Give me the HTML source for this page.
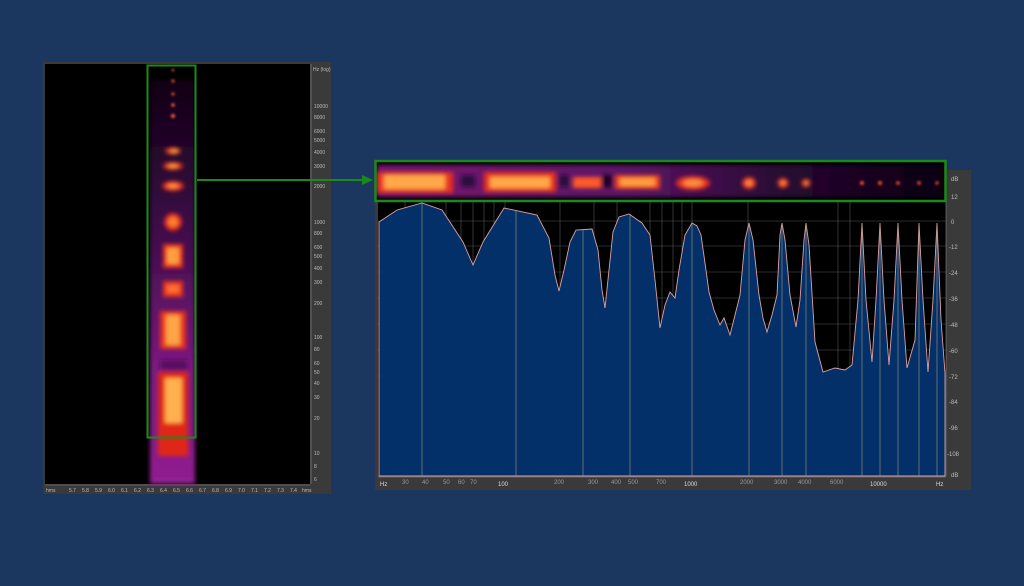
<!DOCTYPE html>
<html><head><meta charset="utf-8"><style>
html,body{margin:0;padding:0;background:#1b3760;}
svg{display:block}
text{font-family:"Liberation Sans",sans-serif;}
</style></head><body>
<svg width="1024" height="586" viewBox="0 0 1024 586" xmlns="http://www.w3.org/2000/svg">
<defs>
<filter id="b2" x="-50%" y="-50%" width="200%" height="200%"><feGaussianBlur stdDeviation="2"/></filter>
<filter id="b1" x="-50%" y="-50%" width="200%" height="200%"><feGaussianBlur stdDeviation="1.2"/></filter>
<filter id="b4" x="-50%" y="-50%" width="200%" height="200%"><feGaussianBlur stdDeviation="4"/></filter>
<linearGradient id="colfade" x1="0" y1="0" x2="0" y2="1">
<stop offset="0" stop-color="#3a0a45" stop-opacity="0.3"/>
<stop offset="0.3" stop-color="#4a0f5a" stop-opacity="0.7"/>
<stop offset="0.7" stop-color="#7a1a80"/>
<stop offset="1" stop-color="#902090"/>
</linearGradient>
<linearGradient id="stripbg" x1="0" y1="0" x2="1" y2="0">
<stop offset="0" stop-color="#7a1870"/>
<stop offset="0.45" stop-color="#5a1565"/>
<stop offset="0.7" stop-color="#2a0835"/>
<stop offset="1" stop-color="#0a0210"/>
</linearGradient>
</defs>
<rect width="1024" height="586" fill="#1b3760"/>

<!-- LEFT PANEL -->
<rect x="43" y="62" width="288" height="432" fill="#3a3a3a"/>
<rect x="45" y="64" width="265" height="420" fill="#000"/>
<g font-size="5" fill="#bbb">
<text x="313" y="71">Hz (log)</text>
<text x="314" y="108">10000</text><text x="314" y="119">8000</text><text x="314" y="133">6000</text><text x="314" y="142">5000</text><text x="314" y="154">4000</text><text x="314" y="168">3000</text><text x="314" y="188">2000</text>
<text x="314" y="224">1000</text><text x="314" y="235">800</text><text x="314" y="249">600</text><text x="314" y="258">500</text><text x="314" y="270">400</text><text x="314" y="284">300</text><text x="314" y="305">200</text>
<text x="314" y="339">100</text><text x="314" y="351">80</text><text x="314" y="365">60</text><text x="314" y="374">50</text><text x="314" y="385">40</text><text x="314" y="399">30</text><text x="314" y="420">20</text>
<text x="314" y="455">10</text><text x="314" y="468">8</text><text x="314" y="481">6</text>
</g>
<line x1="311" y1="64" x2="311" y2="484" stroke="#888" stroke-width="0.6"/>
<line x1="45" y1="485" x2="310" y2="485" stroke="#888" stroke-width="0.6"/>
<g font-size="5" fill="#bbb">
<text x="46" y="492">hms</text><text x="69" y="492">5.7</text><text x="82" y="492">5.8</text><text x="95" y="492">5.9</text><text x="108" y="492">6.0</text><text x="121" y="492">6.1</text><text x="134" y="492">6.2</text><text x="147" y="492">6.3</text><text x="160" y="492">6.4</text><text x="173" y="492">6.5</text><text x="186" y="492">6.6</text><text x="199" y="492">6.7</text><text x="212" y="492">6.8</text><text x="225" y="492">6.9</text><text x="238" y="492">7.0</text><text x="251" y="492">7.1</text><text x="264" y="492">7.2</text><text x="277" y="492">7.3</text><text x="290" y="492">7.4</text><text x="302" y="492">hms</text>
</g>
<!-- column -->
<rect x="150" y="80" width="45" height="404" fill="url(#colfade)" filter="url(#b2)"/>
<g filter="url(#b1)">
<circle cx="173" cy="70" r="1.3" fill="#ff6040"/><circle cx="173" cy="81" r="1.5" fill="#ff6040"/><circle cx="173" cy="94" r="1.5" fill="#ff6040"/><circle cx="173" cy="105" r="1.7" fill="#ff6040"/><circle cx="173" cy="116" r="2" fill="#ff6040"/>
</g>
<g filter="url(#b2)">
<ellipse cx="173" cy="151" rx="8" ry="3.5" fill="#e03020"/><ellipse cx="174" cy="151" rx="4" ry="2" fill="#ffa040"/>
<ellipse cx="173" cy="166" rx="10" ry="4" fill="#e03020"/><ellipse cx="173" cy="166" rx="5" ry="2" fill="#ffa040"/>
<ellipse cx="173" cy="186" rx="11" ry="5" fill="#e02820"/><ellipse cx="173" cy="186" rx="6" ry="2.5" fill="#ff9040"/>
<ellipse cx="173" cy="222" rx="9" ry="9" fill="#e02820"/><ellipse cx="173" cy="222" rx="5" ry="5" fill="#ff8030"/>
<rect x="163" y="244" width="20" height="24" fill="#e83020"/><rect x="167" y="248" width="12" height="16" fill="#ffa040"/>
<rect x="163" y="281" width="20" height="16" fill="#e83020"/><rect x="167" y="285" width="12" height="8" fill="#ff7030"/>
<rect x="160" y="311" width="26" height="38" fill="#e83020"/><rect x="166" y="315" width="14" height="30" fill="#ffa545"/>
<rect x="158" y="372" width="30" height="84" fill="#e02818"/><rect x="165" y="378" width="17" height="45" fill="#ffb050"/>
<rect x="160" y="360" width="28" height="10" fill="#5a1060"/>
</g>
<rect x="147.5" y="65.5" width="48" height="372" fill="none" stroke="#1a8a1a" stroke-width="2"/>
<!-- arrow -->
<line x1="197" y1="180" x2="364" y2="180" stroke="#1a8a1a" stroke-width="2"/>
<polygon points="362,175 373,180 362,185" fill="#1a8a1a"/>

<!-- RIGHT PANEL -->
<rect x="375" y="170" width="596" height="320" fill="#3a3a3a"/>
<rect x="378" y="201" width="568" height="275" fill="#000"/>
<g stroke="#555" stroke-width="0.6">
<line x1="378" y1="221" x2="946" y2="221"/><line x1="378" y1="246" x2="946" y2="246"/><line x1="378" y1="272" x2="946" y2="272"/><line x1="378" y1="298" x2="946" y2="298"/><line x1="378" y1="324" x2="946" y2="324"/><line x1="378" y1="350" x2="946" y2="350"/><line x1="378" y1="376" x2="946" y2="376"/>
<line x1="405" y1="201" x2="405" y2="476"/><line x1="446" y1="201" x2="446" y2="476"/><line x1="461" y1="201" x2="461" y2="476"/><line x1="473" y1="201" x2="473" y2="476"/><line x1="484" y1="201" x2="484" y2="476"/><line x1="494" y1="201" x2="494" y2="476"/><line x1="505" y1="201" x2="505" y2="476"/><line x1="560" y1="201" x2="560" y2="476"/><line x1="594" y1="201" x2="594" y2="476"/><line x1="617" y1="201" x2="617" y2="476"/><line x1="650" y1="201" x2="650" y2="476"/><line x1="662" y1="201" x2="662" y2="476"/><line x1="673" y1="201" x2="673" y2="476"/><line x1="682" y1="201" x2="682" y2="476"/><line x1="692" y1="201" x2="692" y2="476"/><line x1="748" y1="201" x2="748" y2="476"/><line x1="838" y1="201" x2="838" y2="476"/><line x1="850" y1="201" x2="850" y2="476"/>
</g>
<path d="M379,476 L379,222 L397,210 L422,203 L442,210 L463,242 L473,265 L483,242 L504,208 L537,215 L549,238 L555,275 L559,291 L564,270 L570,242 L576,230 L592,229 L598,250 L602,290 L605,308 L609,270 L613,232 L619,217 L629,214 L642,223 L650,235 L655,280 L660,328 L665,305 L670,292 L675,298 L679,270 L685,235 L692,223 L697,226 L701,235 L706,270 L709,292 L714,310 L720,325 L724,318 L730,335 L735,315 L740,295 L745,240 L749,223 L753,240 L759,295 L763,318 L767,332 L772,315 L777,295 L780,235 L782,223 L785,240 L790,295 L796,327 L800,300 L804,240 L806,223 L809,245 L815,342 L823,372 L835,368 L845,370 L852,365 L858,300 L862,223 L866,300 L872,362 L876,300 L880,223 L884,300 L889,365 L894,300 L898,223 L902,300 L907,368 L915,340 L919,223 L923,300 L928,372 L933,300 L937,223 L941,320 L945,373 L945,476 Z" fill="#04306a" stroke="#e0a0a0" stroke-width="0.9"/>
<g stroke="#a8a070" stroke-width="0.7" opacity="0.8">
<line x1="422" y1="203" x2="422" y2="476"/><line x1="516" y1="210" x2="516" y2="476"/><line x1="583" y1="229" x2="583" y2="476"/><line x1="630" y1="214" x2="630" y2="476"/><line x1="692" y1="223" x2="692" y2="476"/><line x1="749" y1="223" x2="749" y2="476"/><line x1="782" y1="223" x2="782" y2="476"/><line x1="806" y1="223" x2="806" y2="476"/><line x1="862" y1="223" x2="862" y2="476"/><line x1="880" y1="223" x2="880" y2="476"/><line x1="898" y1="223" x2="898" y2="476"/><line x1="919" y1="223" x2="919" y2="476"/><line x1="937" y1="223" x2="937" y2="476"/>
</g>
<line x1="378" y1="477" x2="946" y2="477" stroke="#888" stroke-width="0.6"/>
<line x1="946" y1="201" x2="946" y2="476" stroke="#888" stroke-width="0.6"/>
<g font-size="6" fill="#bbb">
<text x="951" y="181">dB</text><text x="951" y="199">12</text><text x="951" y="224">0</text><text x="949" y="249">-12</text><text x="949" y="275">-24</text><text x="949" y="301">-36</text><text x="949" y="327">-48</text><text x="949" y="353">-60</text><text x="949" y="379">-72</text><text x="949" y="404">-84</text><text x="949" y="430">-96</text><text x="947" y="456">-108</text><text x="951" y="477">dB</text>
</g>
<g font-size="6" fill="#999">
<text x="380" y="486" fill="#ddd">Hz</text><text x="402" y="484">30</text><text x="422" y="484">40</text><text x="443" y="484">50</text><text x="458" y="484">60</text><text x="470" y="484">70</text><text x="498" y="486" fill="#ddd">100</text><text x="554" y="484">200</text><text x="588" y="484">300</text><text x="611" y="484">400</text><text x="628" y="484">500</text><text x="656" y="484">700</text><text x="684" y="486" fill="#ddd">1000</text><text x="740" y="484">2000</text><text x="774" y="484">3000</text><text x="798" y="484">4000</text><text x="830" y="484">6000</text><text x="870" y="486" fill="#ddd">10000</text><text x="936" y="486" fill="#ddd">Hz</text>
</g>
<!-- strip -->
<rect x="375" y="161" width="571" height="40" fill="#000"/>
<rect x="377" y="165" width="567" height="32" fill="url(#stripbg)" filter="url(#b2)"/>
<g filter="url(#b2)">
<rect x="377" y="172" width="76" height="21" fill="#e83020"/><rect x="384" y="175" width="61" height="14" fill="#ffa848"/>
<rect x="461" y="175" width="14" height="12" fill="#2a0840"/>
<rect x="484" y="172" width="72" height="20" fill="#e83020"/><rect x="490" y="177" width="60" height="11" fill="#ffa848"/>
<rect x="559" y="175" width="10" height="12" fill="#2a0840"/>
<rect x="573" y="177" width="28" height="11" fill="#ff5a28"/>
<rect x="602" y="175" width="10" height="12" fill="#1a0528"/>
<rect x="615" y="175" width="45" height="14" fill="#f04020"/><rect x="620" y="178" width="35" height="8" fill="#ffa040"/>
<ellipse cx="693" cy="183" rx="17" ry="7" fill="#e83020"/><ellipse cx="693" cy="183" rx="10" ry="3.5" fill="#ff9040"/>
<ellipse cx="749" cy="183" rx="7" ry="6" fill="#e83020"/><ellipse cx="749" cy="183" rx="3.5" ry="3" fill="#ff9040"/>
<ellipse cx="783" cy="183" rx="5.5" ry="5" fill="#e83020"/><ellipse cx="783" cy="183" rx="2.5" ry="2.5" fill="#ff9040"/>
<ellipse cx="806" cy="183" rx="4.5" ry="4" fill="#e83020"/><ellipse cx="806" cy="183" rx="2" ry="2" fill="#ff9040"/>
</g>
<g filter="url(#b1)" fill="#ff5030">
<circle cx="862" cy="183" r="2"/><circle cx="880" cy="183" r="2"/><circle cx="898" cy="183" r="1.8"/><circle cx="919" cy="183" r="1.8"/><circle cx="937" cy="183" r="1.6"/>
</g>
<rect x="375.5" y="161" width="570" height="40" fill="none" stroke="#1a8a1a" stroke-width="2.5"/>
</svg>
</body></html>
